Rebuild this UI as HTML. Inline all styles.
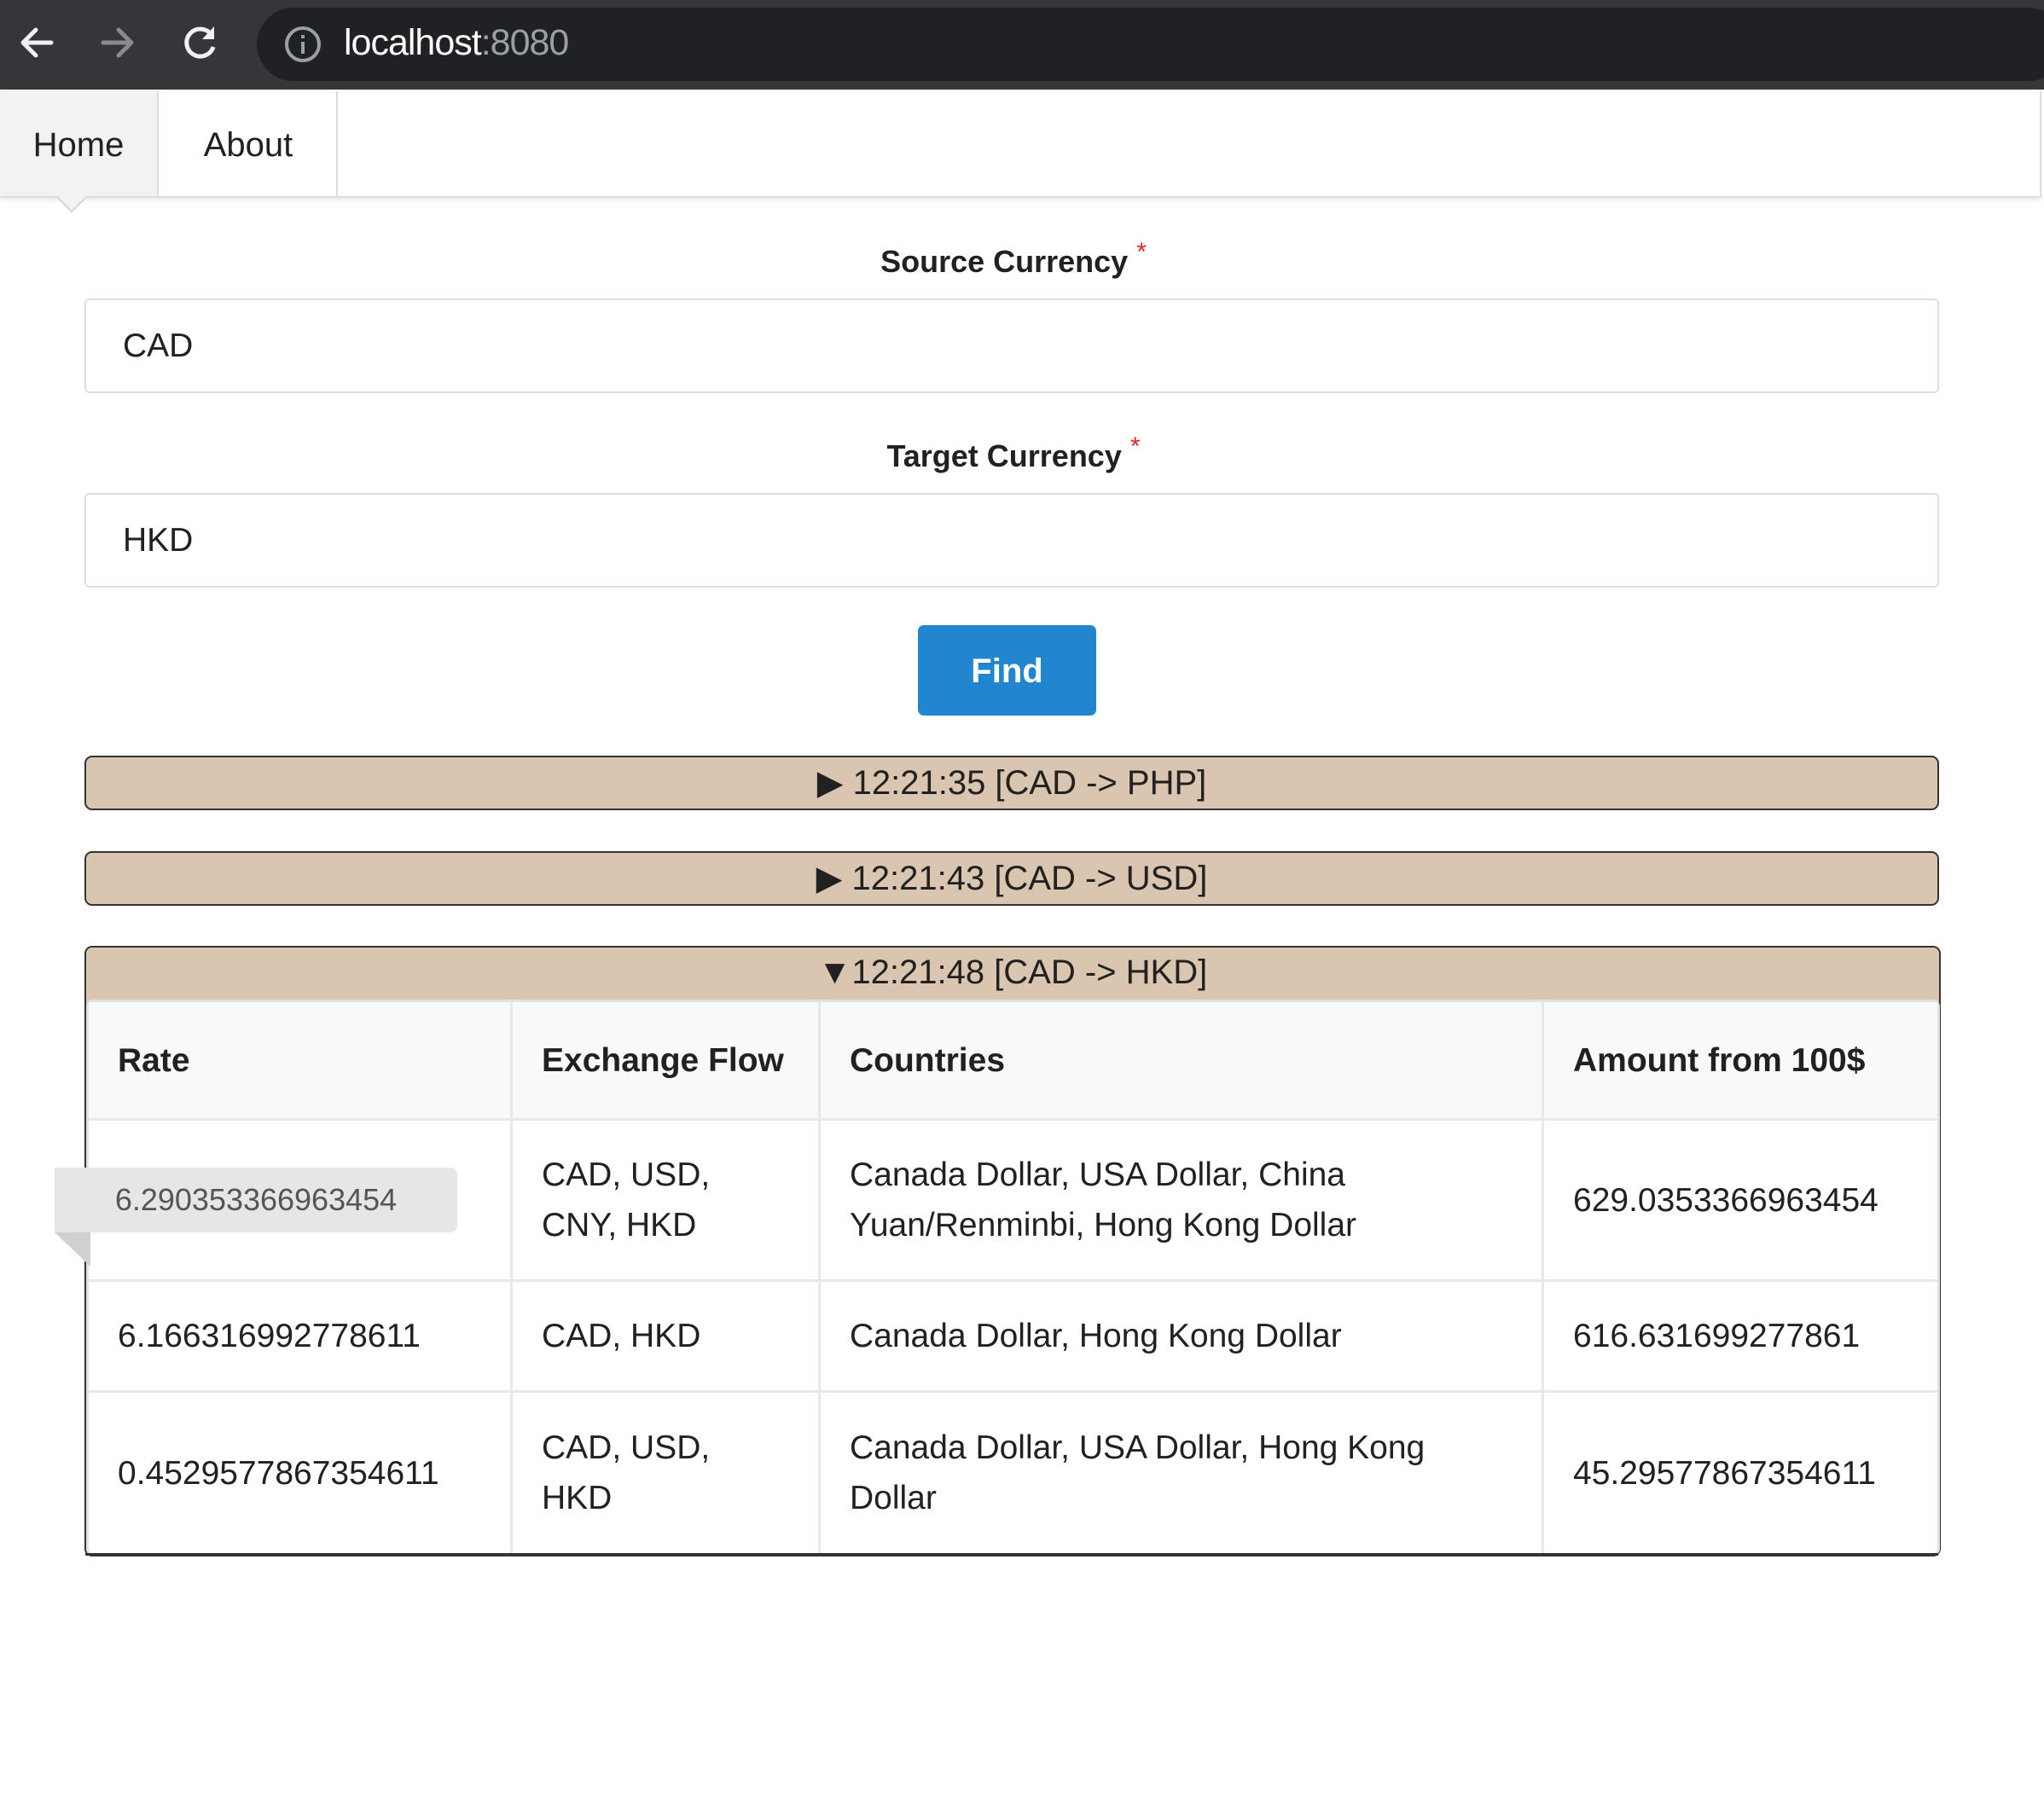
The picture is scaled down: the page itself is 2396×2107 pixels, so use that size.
<!DOCTYPE html>
<html><head><meta charset="utf-8"><style>
*{box-sizing:border-box;margin:0;padding:0}
body{width:2396px;height:2107px;background:#fff;font-family:"Liberation Sans",sans-serif;color:#212121;position:relative;overflow:hidden}
.a{position:absolute}
.chrome{left:0;top:0;width:2396px;height:105px;background:#35363a}
.pill{left:301px;top:9px;width:2120px;height:86px;background:#202124;border-radius:43px}
.url{left:403px;top:26px;font-size:43px;color:#fff;letter-spacing:-1px}
.nav{left:0;top:107px;width:2393px;height:125px;background:#fff;border-bottom:2px solid #dcdcdc;border-right:2px solid #ddd;box-shadow:0 3px 5px rgba(0,0,0,.08)}
.tab{top:107px;height:123px;font-size:40px;line-height:126px;text-align:center}
.lbl{font-size:36px;font-weight:bold;width:2396px;text-align:center;left:-10px}
.lbl span{color:#db2828;font-size:30px;vertical-align:14px;margin-left:10px;font-weight:normal}
.inp{left:99px;width:2174px;height:111px;border:2px solid #dedede;border-radius:6px;font-size:39px;line-height:107px;padding-left:43px}
.btn{left:1076px;top:733px;width:209px;height:106px;background:#2185d0;border-radius:7px;color:#fff;font-weight:bold;font-size:40px;line-height:108px;text-align:center}
.bar{left:99px;width:2174px;height:64px;background:#dac5b0;border:2px solid #333;border-radius:9px;font-size:40px;line-height:60px;text-align:center}
.box{left:99px;top:1109px;width:2176px;height:716px;border:2px solid #333;border-radius:9px;background:#dac5b0}
table{position:absolute;left:101px;top:1172px;width:2173px;border-collapse:separate;border-spacing:0;background:#fff;border:3px solid #e2e2e2;border-radius:8px;font-size:39px}
td,th{border-right:3px solid #e8e8e8;border-bottom:3px solid #e8e8e8;padding:0 34px;text-align:left;vertical-align:middle;line-height:59px}
th{background:#f8f9fa;font-weight:bold;height:139px}
tr td:last-child,tr th:last-child{border-right:none}
tr:last-child td{border-bottom:none}
</style></head><body>
<div class="a chrome"></div>
<div class="a pill"></div>
<svg class="a" style="left:18px;top:25px" width="50" height="50" viewBox="0 0 50 50"><path d="M42 25H10M24 10L9 25l15 15" stroke="#f1f1f1" stroke-width="5" fill="none" stroke-linecap="round" stroke-linejoin="round"/></svg>
<svg class="a" style="left:113px;top:25px" width="50" height="50" viewBox="0 0 50 50"><path d="M8 25h32M26 10l15 15-15 15" stroke="#8a8b8e" stroke-width="5" fill="none" stroke-linecap="round" stroke-linejoin="round"/></svg>
<svg class="a" style="left:210px;top:25px" width="50" height="50" viewBox="0 0 50 50"><path d="M38 16A16 16 0 1 0 40 30" stroke="#f1f1f1" stroke-width="5" fill="none"/><path d="M41 6v15H27z" fill="#f1f1f1"/></svg>
<svg class="a" style="left:332px;top:29px" width="46" height="46" viewBox="0 0 46 46"><circle cx="23" cy="23" r="19" stroke="#9aa0a6" stroke-width="4" fill="none"/><rect x="21" y="20" width="4" height="14" fill="#9aa0a6"/><rect x="21" y="12" width="4" height="4" fill="#9aa0a6"/></svg>
<div class="a url">localhost<span style="color:#9aa0a6">:8080</span></div>
<div class="a nav"></div>
<div class="a tab" style="left:0;width:186px;background:#f2f2f2;border-right:2px solid #ddd">Home</div>
<div class="a tab" style="left:188px;width:208px;border-right:2px solid #ddd">About</div>
<svg class="a" style="left:66px;top:230px" width="36" height="20"><path d="M0 0L18 18L36 0" fill="#f2f2f2" stroke="#d5d5d5" stroke-width="2"/></svg>
<div class="a lbl" style="top:279px">Source Currency<span>*</span></div>
<div class="a lbl" style="top:507px">Target Currency<span>*</span></div>
<div class="a inp" style="top:350px">CAD</div>
<div class="a inp" style="top:578px">HKD</div>
<div class="a btn">Find</div>
<div class="a bar" style="top:886px">▶ 12:21:35 [CAD -&gt; PHP]</div>
<div class="a bar" style="top:998px">▶ 12:21:43 [CAD -&gt; USD]</div>
<div class="a box"></div>
<div class="a" style="left:99px;top:1109px;width:2176px;height:64px;font-size:40px;line-height:62px;text-align:center">▼12:21:48 [CAD -&gt; HKD]</div>
<table>
<tr><th style="width:497px">Rate</th><th style="width:361px">Exchange Flow</th><th style="width:848px">Countries</th><th>Amount from 100$</th></tr>
<tr style="height:189px"><td></td><td>CAD, USD,<br>CNY, HKD</td><td>Canada Dollar, USA Dollar, China<br>Yuan/Renminbi, Hong Kong Dollar</td><td>629.0353366963454</td></tr>
<tr style="height:130px"><td>6.166316992778611</td><td>CAD, HKD</td><td>Canada Dollar, Hong Kong Dollar</td><td>616.631699277861</td></tr>
<tr style="height:188px"><td>0.4529577867354611</td><td>CAD, USD,<br>HKD</td><td>Canada Dollar, USA Dollar, Hong Kong<br>Dollar</td><td>45.29577867354611</td></tr>
</table>
<div class="a" style="left:100px;top:1821px;width:2172px;height:3px;background:#333"></div>
<div class="a" style="left:64px;top:1369px;width:472px;height:76px;background:#e6e6e6;border-radius:0 8px 8px 0;color:#555;font-size:36px;line-height:76px;text-align:center">6.290353366963454</div>
<svg class="a" style="left:64px;top:1445px" width="42" height="40"><path d="M0 0H42V40Z" fill="#d0d0d0"/></svg>
</body></html>
